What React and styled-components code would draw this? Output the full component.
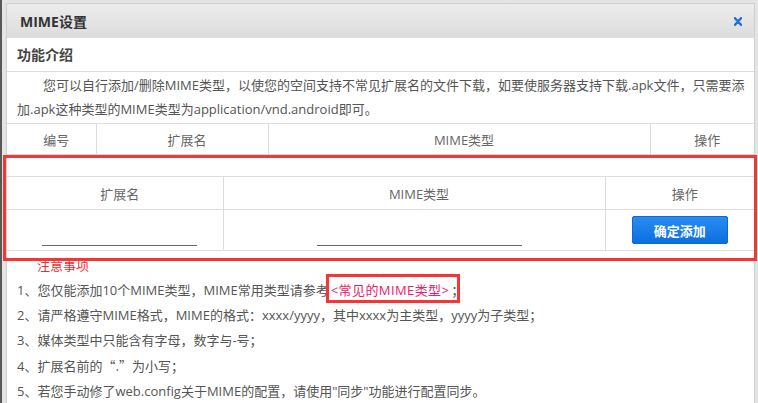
import styled, { createGlobalStyle } from 'styled-components';

const GlobalStyle = createGlobalStyle`
  html, body {
    margin: 0;
    padding: 0;
  }
  body {
    background: #e4e4e4;
    border-left: 2px solid #585858;
    padding: 3px 3px 0 4px;
    font-family: "Open Sans", "Noto Sans CJK SC", sans-serif;
    font-size: 13px;
    color: #555;
    overflow: hidden;
  }
`;

const Page = styled.div`
  position: relative;
`;

const Dialog = styled.div`
  border: 1px solid #cfcfcf;
  background: #fff;
  width: 747px;
`;

const Header = styled.div`
  height: 34px;
  display: flex;
  align-items: center;
  justify-content: space-between;
  padding: 0 12px 0 13px;
  background: linear-gradient(#ececec, #dcdcdc);
`;

const Title = styled.h1`
  margin: 0;
  font-size: 14px;
  font-weight: bold;
  color: #333;
`;

const Close = styled.button`
  border: 0;
  background: none;
  padding: 0;
  width: 8px;
  height: 9px;
  display: flex;
  cursor: pointer;
`;

const SectionTitle = styled.div`
  height: 33px;
  line-height: 33px;
  padding-left: 10px;
  border-bottom: 1px solid #ddd;
  font-size: 14px;
  font-weight: bold;
  color: #444;
`;

const Intro = styled.p`
  margin: 0;
  padding: 1px 8px 2px 10px;
  line-height: 24px;
  text-indent: 26px;
`;

const Table = styled.table`
  width: 100%;
  border-collapse: collapse;
  table-layout: fixed;
  text-align: center;
  color: #666;
`;

const Th = styled.th`
  font-weight: normal;
  height: ${(p) => p.$h || 30}px;
  padding: 0 0 0 10px;
  border-top: 1px solid #ddd;
  border-bottom: 1px solid #ddd;
  & + & {
    border-left: 1px solid #ddd;
  }
`;

const Td = styled.td`
  height: 40px;
  padding: 0 0 0 10px;
  border-bottom: 1px solid #ddd;
  & + & {
    border-left: 1px solid #ddd;
  }
`;

const AddArea = styled.div`
  position: relative;
  padding-top: 21px;
  &::after {
    content: '';
    position: absolute;
    top: 0;
    left: -4px;
    right: -3px;
    bottom: -10px;
    border: 3px solid #f53636;
    pointer-events: none;
  }
`;

const Field = styled.input`
  box-sizing: border-box;
  width: ${(p) => p.$w}px;
  height: 22px;
  margin: 9px 0 0;
  padding: 0 2px;
  border: 0;
  border-bottom: 1px solid #666;
  outline: none;
  background: transparent;
  font: inherit;
`;

const AddButton = styled.button`
  width: 96px;
  height: 28px;
  margin: 0 0 0 -10px;
  border: 1px solid #0b69d2;
  border-radius: 2px;
  background: linear-gradient(#2a8cf0, #0b6fe2);
  color: #fff;
  font-family: inherit;
  font-size: 13px;
  font-weight: bold;
  cursor: pointer;
`;

const Notes = styled.div`
  padding: 2px 10px 10px;
  line-height: 25px;
`;

const NoteTitle = styled.div`
  padding-left: 20px;
  color: #f42a2a;
`;

const Note = styled.div``;

const Wide = styled.span`
  font-family: "Noto Sans CJK SC", sans-serif;
`;

const Link = styled.a`
  position: relative;
  color: #e8206c;
  text-decoration: none;
  letter-spacing: 0.4px;
  padding: 0 2px;
  &::after {
    content: '';
    position: absolute;
    top: -7px;
    left: -3px;
    right: -9px;
    bottom: -4px;
    border: 3px solid #f53636;
    pointer-events: none;
  }
`;

const CloseIcon = () => (
  <svg width="8" height="9" viewBox="0 0 8 9">
    <path d="M1 1.2 L7 7.8 M7 1.2 L1 7.8" stroke="#1c6fdc" strokeWidth="2.4" strokeLinecap="round" fill="none" />
  </svg>
);

const notes = [
  '2、请严格遵守MIME格式，MIME的格式：xxxx/yyyy，其中xxxx为主类型，yyyy为子类型；',
  '3、媒体类型中只能含有字母，数字与-号；',
];

export default function App() {
  return (
    <Page>
      <GlobalStyle />
      <Dialog>
        <Header>
          <Title>MIME设置</Title>
          <Close aria-label="关闭">
            <CloseIcon />
          </Close>
        </Header>
        <SectionTitle>功能介绍</SectionTitle>
        <Intro>
          您可以自行添加/删除MIME类型，以使您的空间支持不常见扩展名的文件下载，如要使服务器支持下载.apk文件，只需要添加.apk这种类型的MIME类型为application/vnd.android即可。
        </Intro>
        <Table>
          <colgroup>
            <col style={{ width: 89 }} />
            <col style={{ width: 172 }} />
            <col style={{ width: 382 }} />
            <col />
          </colgroup>
          <thead>
            <tr>
              <Th>编号</Th>
              <Th>扩展名</Th>
              <Th>MIME类型</Th>
              <Th>操作</Th>
            </tr>
          </thead>
        </Table>
        <AddArea>
          <Table>
            <colgroup>
              <col style={{ width: 216 }} />
              <col style={{ width: 382 }} />
              <col />
            </colgroup>
            <thead>
              <tr>
                <Th $h={32}>扩展名</Th>
                <Th $h={32}>MIME类型</Th>
                <Th $h={32}>操作</Th>
              </tr>
            </thead>
            <tbody>
              <tr>
                <Td>
                  <Field $w={155} />
                </Td>
                <Td>
                  <Field $w={205} />
                </Td>
                <Td>
                  <AddButton>确定添加</AddButton>
                </Td>
              </tr>
            </tbody>
          </Table>
        </AddArea>
        <Notes>
          <NoteTitle>注意事项</NoteTitle>
          <Note>
            1、您仅能添加10个MIME类型，MIME常用类型请参考<Link href="#">&lt;常见的MIME类型&gt;</Link>；
          </Note>
          {notes.map((n) => (
            <Note key={n}>{n}</Note>
          ))}
          <Note>
            4、扩展名前的<Wide>“.”</Wide>为小写；
          </Note>
          <Note>5、若您手动修了web.config关于MIME的配置，请使用"同步"功能进行配置同步。</Note>
        </Notes>
      </Dialog>
    </Page>
  );
}
